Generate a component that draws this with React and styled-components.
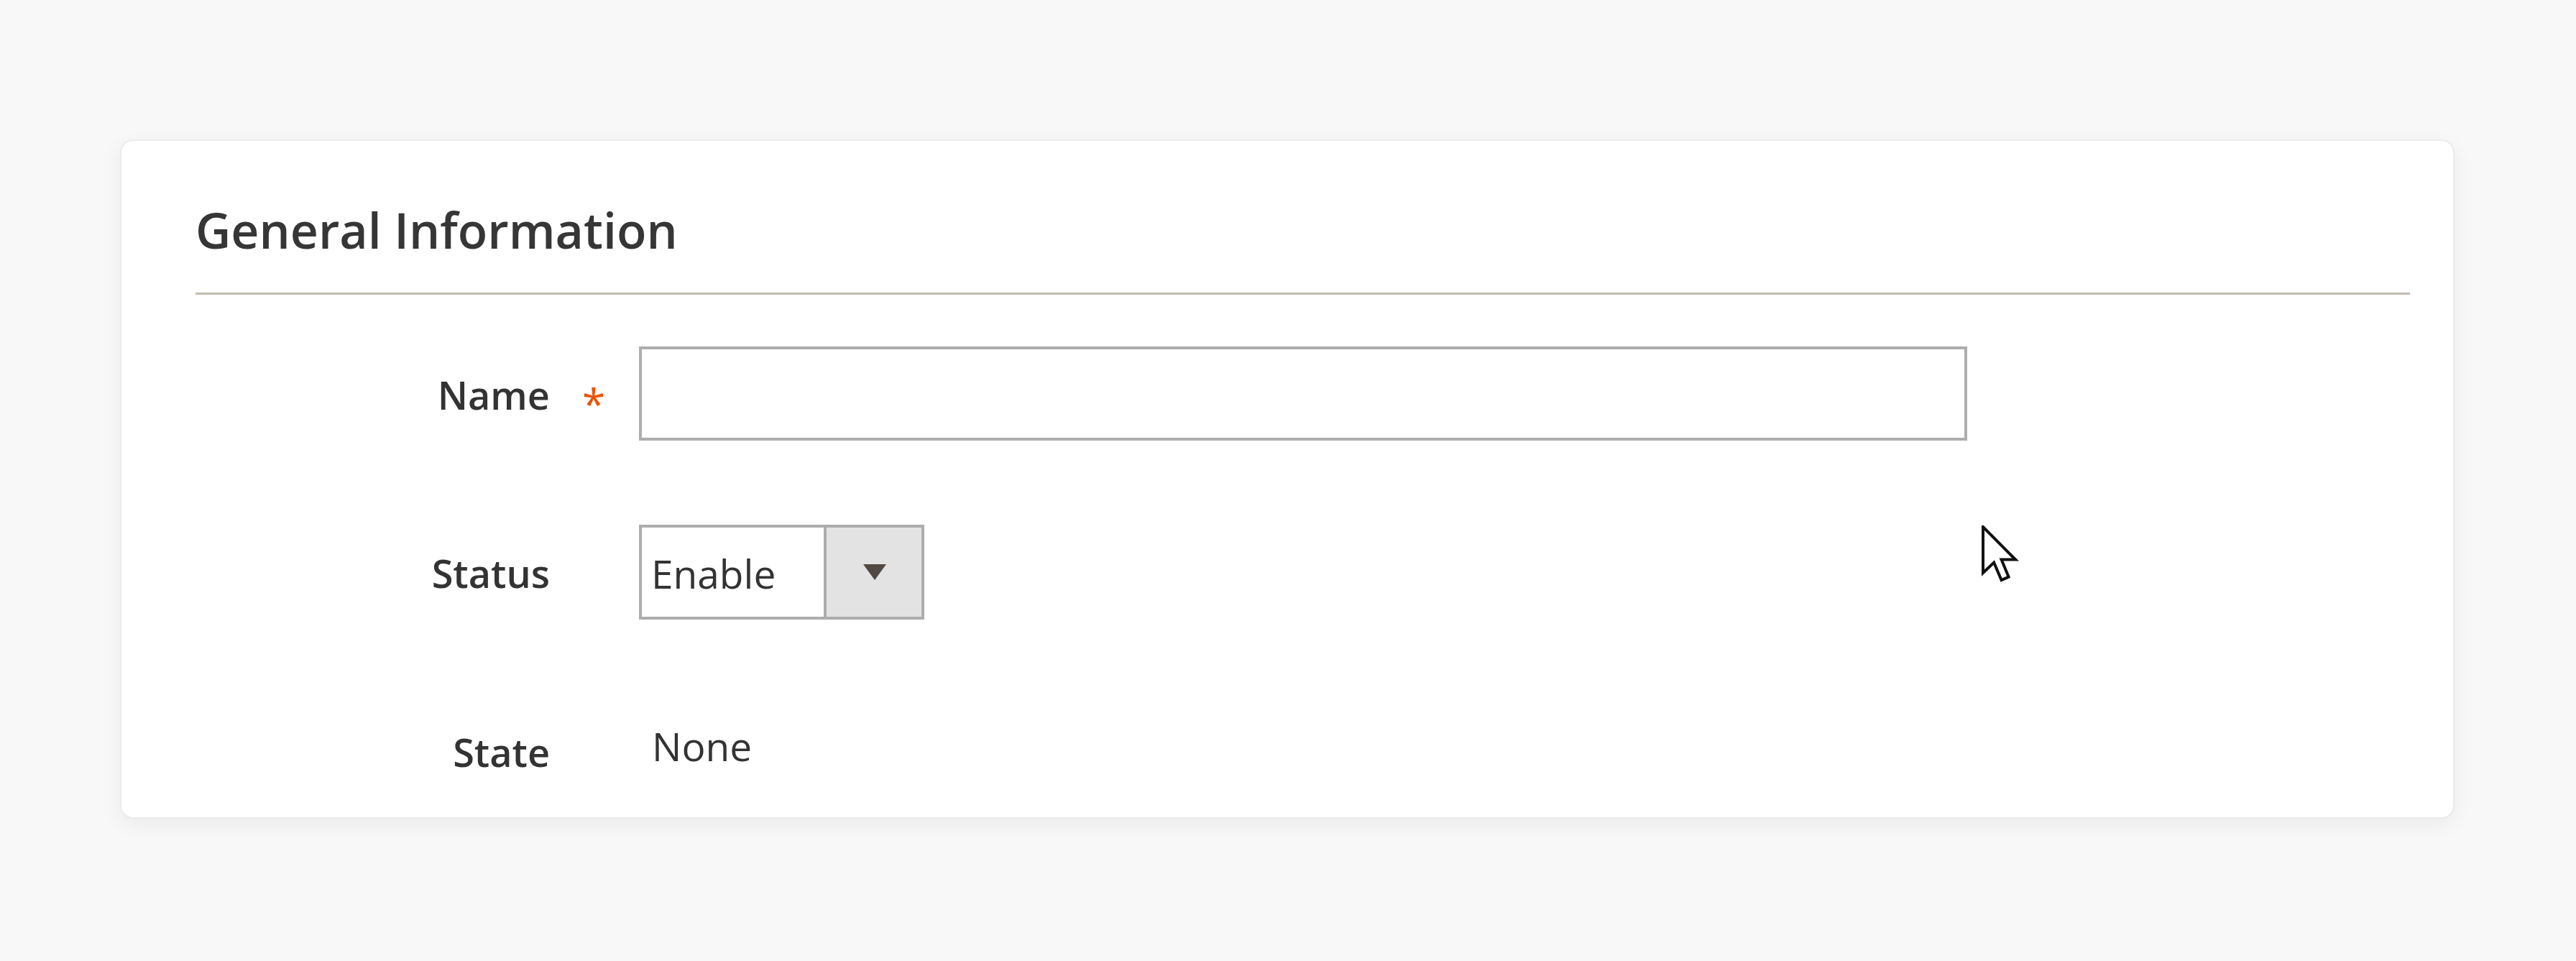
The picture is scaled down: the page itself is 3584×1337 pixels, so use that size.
import styled, { createGlobalStyle } from 'styled-components';

const GlobalStyle = createGlobalStyle`
  html, body {
    margin: 0;
    padding: 0;
    background: #f8f8f8;
  }

  body {
    font-family: "Open Sans", "Liberation Sans", sans-serif;
    color: #333333;
  }

  * {
    box-sizing: border-box;
  }
`;

const Page = styled.div`
  min-height: 1337px;
  padding: 194px 169px 0 167px;
`;

const Card = styled.section`
  position: relative;
  background: #ffffff;
  border: 2px solid #ebebeb;
  border-radius: 18px;
  box-shadow: 0 8px 28px rgba(0, 0, 0, 0.06);
  padding: 90px 60px 64px 103px;
`;

const Title = styled.h2`
  margin: 0;
  font-size: 68px;
  line-height: 67px;
  font-weight: 600;
  color: #363636;
  padding-bottom: 54px;
  border-bottom: 3px solid #c4bcb1;
`;

const Fieldset = styled.div`
  margin-top: 72px;
  display: flex;
  flex-direction: column;
  gap: 117px;
`;

const Row = styled.div`
  display: flex;
  align-items: flex-start;
`;

const Label = styled.label`
  position: relative;
  flex: 0 0 617px;
  padding: 40px 124px 0 0;
  text-align: right;
  font-size: 54px;
  line-height: 54px;
  font-weight: 600;
  color: #333333;

  ${({ $required }) => $required && `
    &::after {
      content: '*';
      position: absolute;
      right: 47px;
      top: 51px;
      font-size: 58px;
      line-height: 58px;
      font-weight: 400;
      color: #eb5202;
    }
  `}
`;

const TextInput = styled.input`
  width: 1848px;
  height: 131px;
  border: 4px solid #adadad;
  border-radius: 0;
  background: #ffffff;
  outline: none;
  padding: 0 14px;
  font-family: inherit;
  font-size: 55px;
  color: #333333;
`;

const Select = styled.div`
  display: flex;
  width: 397px;
  height: 132px;
  border: 4px solid #adadad;
  background: #ffffff;
`;

const SelectValue = styled.div`
  flex: 1;
  display: flex;
  align-items: center;
  padding: 2px 0 0 13px;
  font-size: 55px;
  color: #333333;
`;

const SelectButton = styled.div`
  flex: 0 0 136px;
  display: flex;
  align-items: center;
  justify-content: center;
  border-left: 4px solid #adadad;
  background: #e3e3e3;
  padding-left: 2px;
`;

const StaticValue = styled.div`
  padding: 31px 0 0 18px;
  font-size: 55px;
  line-height: 55px;
  color: #333333;
`;

const Cursor = styled.svg`
  position: absolute;
  left: 2588px;
  top: 535px;
  width: 52px;
  height: 80px;
`;

export default function App() {
  return (
    <>
      <GlobalStyle />
      <Page>
        <Card>
          <Title>General Information</Title>
          <Fieldset>
            <Row>
              <Label $required>Name</Label>
              <TextInput type="text" />
            </Row>
            <Row>
              <Label>Status</Label>
              <Select>
                <SelectValue>Enable</SelectValue>
                <SelectButton>
                  <svg width="32" height="22" viewBox="0 0 32 22">
                    <polygon points="0,0 32,0 16,22" fill="#514943" />
                  </svg>
                </SelectButton>
              </Select>
            </Row>
            <Row>
              <Label>State</Label>
              <StaticValue>None</StaticValue>
            </Row>
          </Fieldset>
          <Cursor viewBox="0 0 13 20">
            <path
              d="M0.5 0.5 L0.5 16.5 L4.3 12.9 L6.9 19 L9.4 17.9 L6.9 11.9 L11.8 11.9 Z"
              fill="#ffffff"
              stroke="#111111"
              strokeWidth="1"
              strokeLinejoin="miter"
            />
          </Cursor>
        </Card>
      </Page>
    </>
  );
}
